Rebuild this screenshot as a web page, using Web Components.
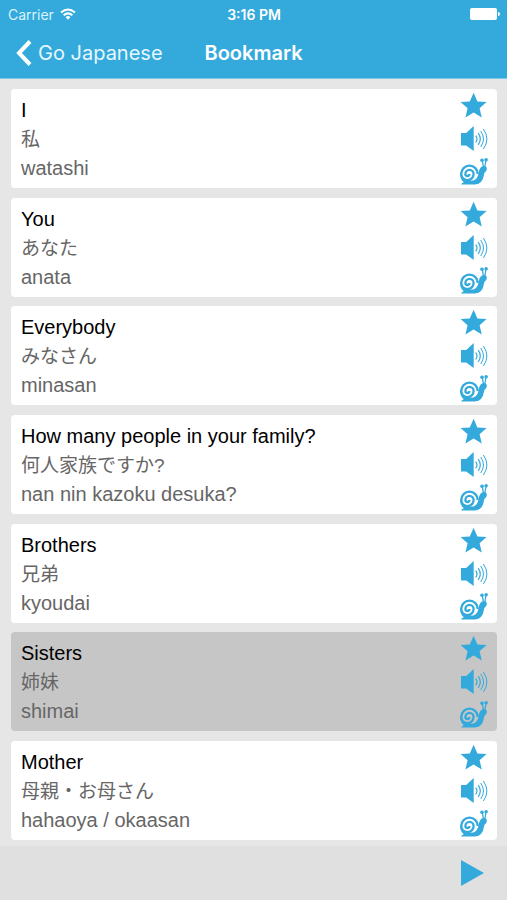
<!DOCTYPE html>
<html lang="en">
<head>
<meta charset="utf-8">
<meta name="viewport" content="width=device-width">
<title>Bookmark</title>
<style>
html, body { margin: 0; height: 100%; }
body { --blue: #34aadc; font-family: "Liberation Sans", "Noto Sans CJK JP", sans-serif; background: #e6e6e6; }
</style>
</head>
<body>
<bookmark-app></bookmark-app>
<script>
const define = (name, html) => {
  const template = document.createElement('template');
  template.innerHTML = html;
  customElements.define(name, class extends HTMLElement {
    constructor() {
      super();
      this.attachShadow({ mode: 'open' }).append(template.content.cloneNode(true));
    }
  });
};

define('status-bar', `
<style>
:host { display: grid; grid-template-columns: 1fr auto 1fr; align-items: center; height: 26px; padding: 1px 7px 0 8px; font: 14px Inter, sans-serif; color: #fff; }
.left { display: flex; align-items: center; gap: 6px; color: #d9f2fc; }
.time { font-weight: 600; }
.battery { justify-self: end; }
svg { display: block; }
</style>
<div class="left"><span>Carrier</span>
<svg width="16" height="12" viewBox="0 0 16 12" fill="none" stroke="#fff" stroke-width="2"><path d="M1 4.5Q8-1.5 15 4.5M3.6 7.3Q8 3.5 12.4 7.3"/><path d="M5.6 9.2Q8 7 10.4 9.2L8 11.8Z" fill="#fff" stroke="none"/></svg></div>
<span class="time">3:16 PM</span>
<svg class="battery" width="30" height="12" viewBox="0 0 30 12" fill="#fff"><rect width="27" height="12" rx="2"/><path d="M28 4q2 0 2 2t-2 2z"/></svg>`);

define('nav-bar', `
<style>
:host { display: grid; grid-template-columns: 1fr auto 1fr; align-items: center; height: 51px; padding: 0 16px; font: 20px Inter, sans-serif; color: #fff; }
a { display: flex; align-items: center; gap: 6px; color: #e6f7fe; text-decoration: none; white-space: nowrap; }
h1 { margin: 0; font-size: 20px; font-weight: 600; }
</style>
<a href="#"><svg width="16" height="26" viewBox="0 0 16 26" fill="none" stroke="#fff" stroke-width="4"><path d="M14 1.5L3 13l11 11.5"/></svg><slot name="back"></slot></a>
<h1><slot></slot></h1>`);

define('phrase-card', `
<style>
:host { display: flex; justify-content: space-between; background: #fff; border-radius: 4px; padding: 0 9px 0 10px; color: #666; }
:host([selected]) { background: #c6c6c6; }
.text { display: flex; flex-direction: column; padding-top: 7px; font-size: 20px; line-height: 29px; }
.term { color: #000; }
.kana { font-size: 19px; }
.actions { display: flex; flex-direction: column; }
button { display: block; padding: 0; border: 0; background: none; color: var(--blue); cursor: pointer; }
svg { display: block; }
</style>
<div class="text"><span class="term"><slot name="term"></slot></span><span class="kana" lang="ja"><slot name="kana"></slot></span><span><slot name="romaji"></slot></span></div>
<div class="actions">
<button aria-label="Bookmark"><svg width="28" height="33" viewBox="0 0 28 33" fill="currentColor"><path d="M13.6 3.8L17.4 12.4 26.6 13.1 19.6 19.2 21.8 28.4 13.6 23.6 5.4 28.4 7.6 19.2 .6 13.1 9.8 12.4Z"/></svg></button>
<button aria-label="Listen"><svg width="28" height="33" viewBox="0 0 28 33" fill="currentColor"><path d="M1 11h5.2L13.7 4v25L6.2 23.5H1Z"/><g fill="none" stroke="currentColor" stroke-width="1.2"><path d="M15.7 13.7Q18.3 17 15.7 20.3"/><path d="M18.2 11.2Q22.4 17 18.2 22.8"/><path d="M20.7 9Q26.3 17 20.7 25" stroke-width="1"/><path d="M23.4 7Q30.4 17 23.4 27" stroke-width="1"/></g></svg></button>
<button aria-label="Listen slowly"><svg width="28" height="33" viewBox="0 0 28 33" fill="none" stroke="currentColor"><path d="M1.2 29.4C2 27.4 4 27.2 5.5 26.8L4 25 9 25.3Q15 26.5 17 22.5C19.5 19 18 13.5 22 11.4Q26.8 10.2 26.8 13.8C26.8 17 24.5 16.5 24 19.4Q22.8 28.8 15 29.4Z" fill="currentColor" stroke="none"/><path d="M9.4 19A2 2 0 0 1 5.4 19A4.1 4.1 0 0 1 13.6 19A6.2 6.2 0 0 1 1.2 19A8.3 8.3 0 0 1 17.8 19" stroke-width="2.3"/><path d="M1.2 18.5C1 22.5 3 26 6 27.2" stroke-width="2"/><path d="M23.4 12L22.4 5.8M24.8 12L26 5.5" stroke-width="1.3"/><g fill="currentColor" stroke="none"><circle cx="22" cy="5.2" r="1.8"/><circle cx="26.1" cy="4.7" r="1.8"/></g></svg></button>
</div>`);

define('player-bar', `
<style>
:host { display: flex; justify-content: flex-end; align-items: center; height: 54px; padding-right: 23px; background: #e0e0e0; }
button { padding: 0; border: 0; background: none; color: var(--blue); cursor: pointer; }
svg { display: block; }
</style>
<button aria-label="Play all"><svg width="23" height="26" viewBox="0 0 23 26" fill="currentColor"><path d="M0 0l23 13L0 26z"/></svg></button>`);

define('bookmark-app', `
<style>
:host { display: flex; flex-direction: column; min-height: 100vh; }
header { background: var(--blue); border-bottom: 1px solid #7cc8e8; }
main { flex: 1; display: flex; flex-direction: column; justify-content: space-between; padding: 10px 10px 6px 11px; }
</style>
<header><status-bar></status-bar><nav-bar><span slot="back">Go Japanese</span>Bookmark</nav-bar></header>
<main>
${[
  ['I', '私', 'watashi'],
  ['You', 'あなた', 'anata'],
  ['Everybody', 'みなさん', 'minasan'],
  ['How many people in your family?', '何人家族ですか?', 'nan nin kazoku desuka?'],
  ['Brothers', '兄弟', 'kyoudai'],
  ['Sisters', '姉妹', 'shimai', 'selected'],
  ['Mother', '母親・お母さん', 'hahaoya / okaasan']
].map(([term, kana, romaji, state = '']) => `<phrase-card ${state}><span slot="term">${term}</span><span slot="kana">${kana}</span><span slot="romaji">${romaji}</span></phrase-card>`).join('')}
</main>
<player-bar></player-bar>`);
</script>
</body>
</html>
